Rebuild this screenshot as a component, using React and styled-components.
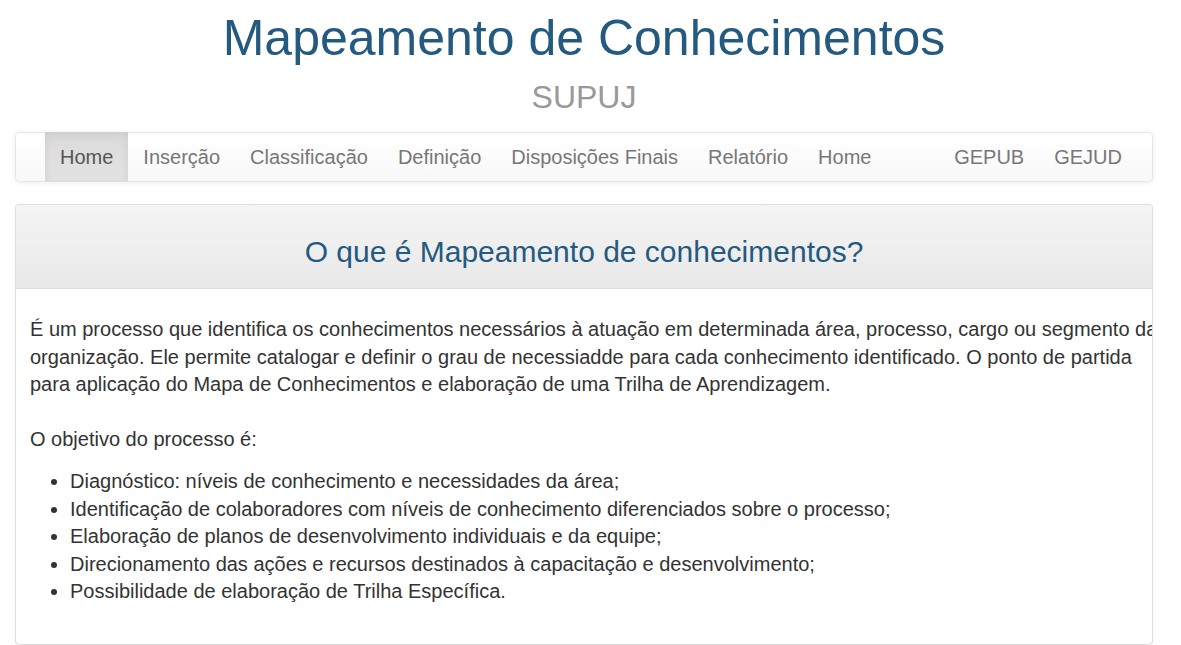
import React from "react";
import styled, { createGlobalStyle } from "styled-components";

const navLeft = [
  "Home",
  "Inserção",
  "Classificação",
  "Definição",
  "Disposições Finais",
  "Relatório",
  "Home",
];
const navRight = ["GEPUB", "GEJUD"];

const objetivos = [
  "Diagnóstico: níveis de conhecimento e necessidades da área;",
  "Identificação de colaboradores com níveis de conhecimento diferenciados sobre o processo;",
  "Elaboração de planos de desenvolvimento individuais e da equipe;",
  "Direcionamento das ações e recursos destinados à capacitação e desenvolvimento;",
  "Possibilidade de elaboração de Trilha Específica.",
];

export default function App() {
  return (
    <>
      <GlobalStyle />
      <Container>
        <Title>Mapeamento de Conhecimentos</Title>
        <Subtitle>SUPUJ</Subtitle>

        <Navbar>
          <NavList>
            {navLeft.map((label, i) => (
              <NavItem key={i} active={i === 0}>
                {label}
              </NavItem>
            ))}
          </NavList>
          <NavList>
            {navRight.map(label => (
              <NavItem key={label}>{label}</NavItem>
            ))}
          </NavList>
        </Navbar>

        <Panel>
          <PanelHeading>
            <PanelTitle>O que é Mapeamento de conhecimentos?</PanelTitle>
          </PanelHeading>
          <PanelBody>
            <Paragraph>
              É um processo que identifica os conhecimentos necessários à atuação em
              determinada área, processo, cargo ou segmento da organização. Ele permite
              catalogar e definir o grau de necessiadde para cada conhecimento
              identificado. O ponto de partida para aplicação do Mapa de Conhecimentos e
              elaboração de uma Trilha de Aprendizagem.
              <br />
              <br />
              O objetivo do processo é:
            </Paragraph>
            <List>
              {objetivos.map(item => (
                <li key={item}>{item}</li>
              ))}
            </List>
          </PanelBody>
        </Panel>
      </Container>
    </>
  );
}

//styles
const GlobalStyle = createGlobalStyle`
  body {
    margin: 0;
    background: #fff;
    color: #333;
    font-family: "Liberation Sans", Arial, sans-serif;
  }
`;

const Container = styled.div`
  width: 1138px;
  margin-left: 15px;
`;

const Title = styled.h1`
  margin: 11px 0 0;
  font-size: 50px;
  font-weight: 400;
  line-height: 1.1;
  text-align: center;
  color: #245a80;
`;

const Subtitle = styled.h2`
  margin: 14px 0 0;
  font-size: 32px;
  font-weight: 400;
  line-height: 1.1;
  text-align: center;
  color: #999;
`;

const Navbar = styled.nav`
  display: flex;
  justify-content: space-between;
  height: 50px;
  margin-top: 17px;
  padding: 0 15px 0 29px;
  box-sizing: border-box;
  border: 1px solid #e7e7e7;
  border-radius: 4px;
  background: linear-gradient(to bottom, #fff 0%, #f8f8f8 100%);
  box-shadow: inset 0 1px 0 rgba(255, 255, 255, 0.15), 0 1px 5px rgba(0, 0, 0, 0.075);
`;

const NavList = styled.ul`
  display: flex;
  margin: -1px 0;
  padding: 0;
  list-style: none;
`;

const NavItem = styled.li`
  padding: 15px;
  font-size: 20px;
  line-height: 20px;
  color: ${p => (p.active ? "#555" : "#777")};
  background: ${p =>
    p.active ? "linear-gradient(to bottom, #dbdbdb 0%, #e2e2e2 100%)" : "none"};
  box-shadow: ${p => (p.active ? "inset 0 3px 9px rgba(0, 0, 0, 0.075)" : "none")};
`;

const Panel = styled.section`
  margin-top: 22px;
  border: 1px solid #ddd;
  border-radius: 4px;
  background: #fff;
  overflow: hidden;
  box-shadow: 0 1px 2px rgba(0, 0, 0, 0.05);
`;

const PanelHeading = styled.header`
  padding: 10px 15px;
  border-bottom: 1px solid #ddd;
  background: linear-gradient(to bottom, #f5f5f5 0%, #e8e8e8 100%);
`;

const PanelTitle = styled.h3`
  margin: 20px 0 10px;
  font-size: 30px;
  font-weight: 400;
  line-height: 1.1;
  text-align: center;
  color: #245a80;
`;

const PanelBody = styled.div`
  padding: 27px 14px 28px;
  font-size: 20px;
  line-height: 27.5px;
  color: #333;
`;

const Paragraph = styled.p`
  width: 1140px;
  margin: 0 0 14.5px;
`;

const List = styled.ul`
  margin: 0 0 10px;
  padding-left: 40px;
`;
